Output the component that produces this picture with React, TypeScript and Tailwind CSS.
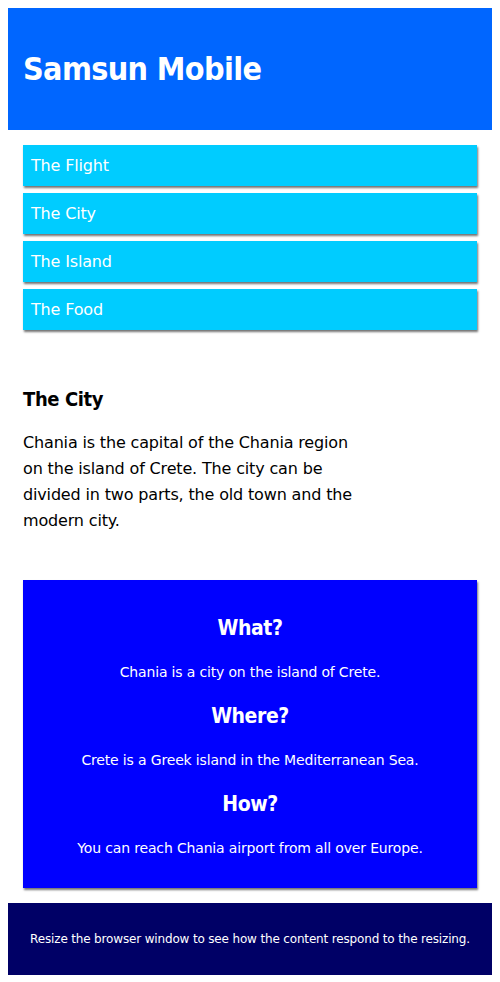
const menu = ["The Flight", "The City", "The Island", "The Food"];

const facts = [
  { q: "What?", a: "Chania is a city on the island of Crete." },
  { q: "Where?", a: "Crete is a Greek island in the Mediterranean Sea." },
  { q: "How?", a: "You can reach Chania airport from all over Europe." },
];

const heading = "font-['DejaVu_Sans_Condensed','DejaVu_Sans',sans-serif] font-stretch-condensed font-bold tracking-[-0.02em]";

export default function App() {
  return (
    <div className="m-2 bg-white text-black font-['DejaVu_Sans',sans-serif] tracking-[-0.01em]">
      {/* Header */}
      <div className="bg-[#0066ff] p-[15px] text-white">
        <h1 className={`my-[21px] text-[32px] leading-[50px] ${heading}`}>Samsun Mobile</h1>
      </div>

      {/* Menu */}
      <div className="p-[15px]">
        <ul className="flex flex-col gap-[7px] pb-[7px]">
          {menu.map((item) => (
            <li
              key={item}
              className="bg-[#00ccff] p-2 text-[16px] leading-[25px] text-white shadow-[1px_2px_2px_rgba(0,0,0,0.55)]"
            >
              {item}
            </li>
          ))}
        </ul>
      </div>

      {/* Main */}
      <div className="p-[15px]">
        <h1 className={`mt-[17px] text-[20px] leading-[31px] ${heading}`}>The City</h1>
        <p className="mt-[15px] mb-4 w-[340px] text-[16px] leading-[26px]">
          Chania is the capital of the Chania region on the island of Crete. The city can be
          divided in two parts, the old town and the modern city.
        </p>
      </div>

      {/* Aside */}
      <div className="p-[15px]">
        <div className="bg-[#0000ff] px-[15px] pt-[15px] pb-[29px] text-center text-[14px] text-white shadow-[1px_2px_2px_rgba(0,0,0,0.55)]">
          {facts.map((f) => (
            <div key={f.q}>
              <h2 className={`mt-[17px] text-[21px] leading-[32px] ${heading}`}>{f.q}</h2>
              <p className="mt-[17px] leading-[22px]">{f.a}</p>
            </div>
          ))}
        </div>
      </div>

      {/* Footer */}
      <div className="bg-[#000066] p-[15px] text-center text-[12px] text-white">
        <p className="my-3 leading-[18px]">
          Resize the browser window to see how the content respond to the resizing.
        </p>
      </div>
    </div>
  );
}
